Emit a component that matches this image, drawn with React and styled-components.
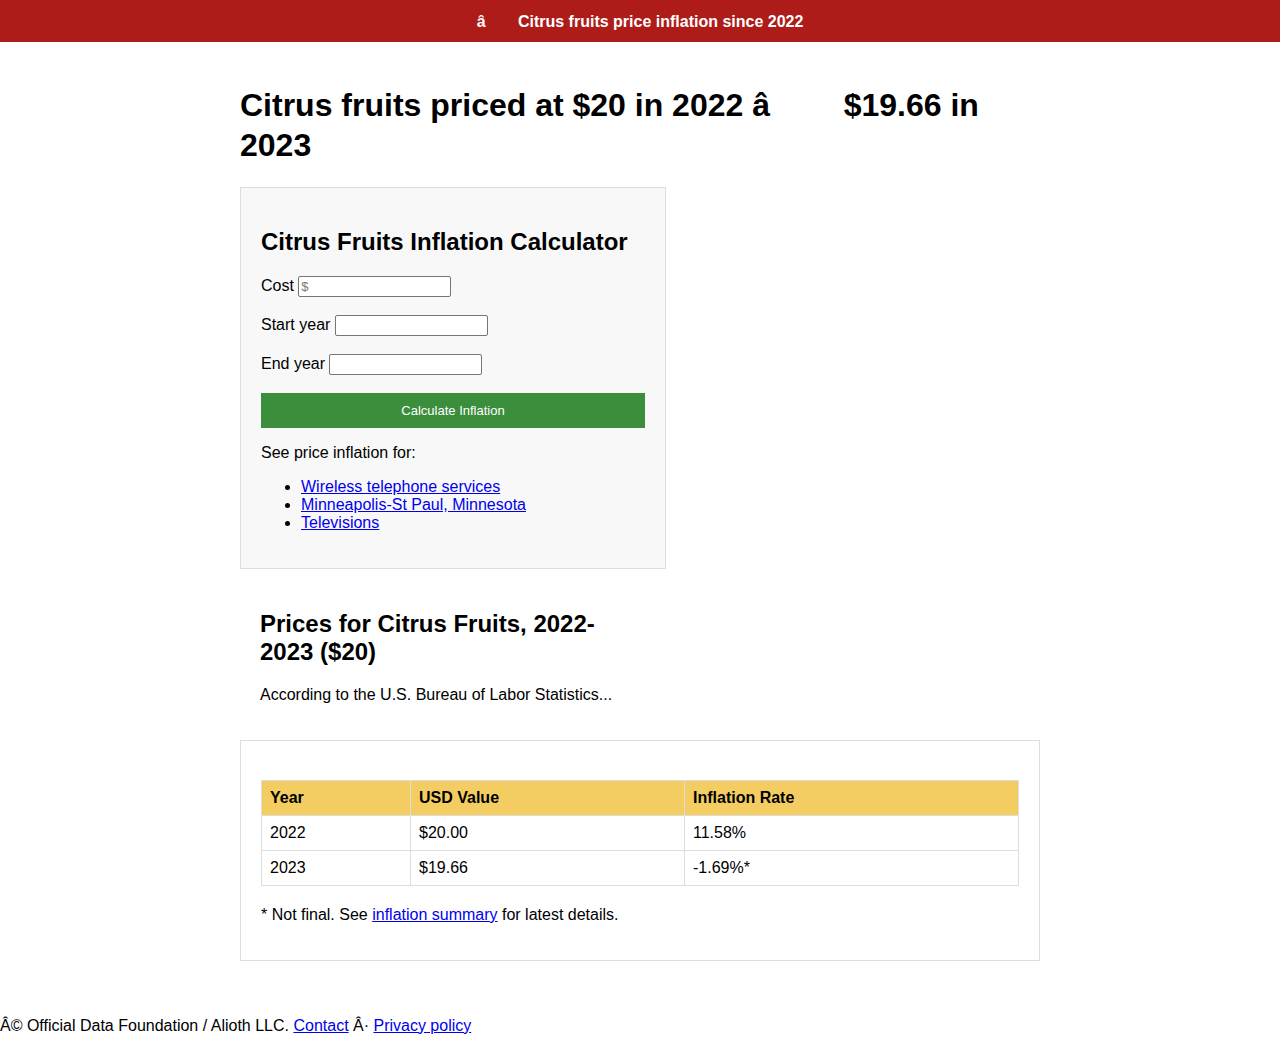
import React from 'react';
import styled, { createGlobalStyle } from 'styled-components';

const GlobalStyle = createGlobalStyle`
  body {
    margin: 0;
    font-family: "Liberation Sans", Arial, sans-serif;
    font-size: 16px;
    color: #000;
    background: #fff;
  }
  a {
    color: #0000ee;
  }
`;

const TopBar = styled.div`
  background: #ad1c18;
  height: 42px;
  box-sizing: border-box;
  padding-top: 1px;
  display: flex;
  align-items: center;
  justify-content: center;
  color: #fff;
  font-weight: bold;
  font-size: 16px;
`;

// the broken arrow bytes render a little wider in the original
const Garbled = styled.span`
  letter-spacing: 0.2em;
`;

const Main = styled.main`
  width: 800px;
  margin: 0 auto 56px;
  padding-top: 22px;
`;

const Title = styled.h1`
  font-size: 32px;
  line-height: 40px;
  margin: 0.67em 0;
`;

const Panel = styled.section`
  width: 426px;
  box-sizing: border-box;
  padding: ${(p) => (p.$shaded ? '20px' : '21px 20px 20px')};
  background: ${(p) => (p.$shaded ? '#f8f8f8' : 'transparent')};
  border: ${(p) => (p.$shaded ? '1px solid #dddddd' : 'none')};
`;

const Card = styled.section`
  box-sizing: border-box;
  padding: 20px;
  border: 1px solid #dddddd;
`;

const SubTitle = styled.h2`
  font-size: 24px;
  margin: 0.83em 0;
`;

const Field = styled.p`
  margin: 16px 0;
`;

const Input = styled.input`
  width: 153px;
  height: 21px;
  box-sizing: border-box;
  margin: 0 0 2px;
  border: 1px solid #767676;
  border-radius: 2px;
  padding: 1px 2px;
  font-family: "Liberation Sans", Arial, sans-serif;
  font-size: 13px;
  vertical-align: baseline;
  &::placeholder {
    color: #777;
  }
`;

const CalcButton = styled.button`
  display: block;
  width: 100%;
  height: 35px;
  margin: 0;
  border: none;
  background: #3a8e3c;
  color: #fff;
  font-family: "Liberation Sans", Arial, sans-serif;
  font-size: 13px;
  cursor: pointer;
`;

const Links = styled.ul`
  margin: 16px 0;
  padding-left: 40px;
`;

const Table = styled.table`
  width: 100%;
  border-collapse: collapse;
  margin: 19px 0 20px;
`;

const Th = styled.th`
  background: #f3cd62;
  text-align: left;
  font-weight: bold;
  padding: 8px;
  border: 1px solid #dddddd;
  height: 35px;
  box-sizing: border-box;
`;

const Td = styled.td`
  padding: 8px;
  border: 1px solid #dddddd;
  height: 35px;
  box-sizing: border-box;
`;

const Note = styled.p`
  margin: 16px 0;
`;

const Footer = styled.footer`
  padding: 0;
`;

const rows = [
  ['2022', '$20.00', '11.58%'],
  ['2023', '$19.66', '-1.69%*'],
];

export default function App() {
  return (
    <>
      <GlobalStyle />
      <TopBar>
        â<Garbled>{'\u0086\u0090'}</Garbled> Citrus fruits price inflation since 2022
      </TopBar>
      <Main>
        <Title>
          Citrus fruits priced at $20 in 2022 â<Garbled>{'\u0086\u0092'}</Garbled> $19.66 in 2023
        </Title>
        <Panel $shaded>
          <SubTitle>Citrus Fruits Inflation Calculator</SubTitle>
          <Field>
            Cost <Input type="text" placeholder="$" />
          </Field>
          <Field>
            Start year <Input type="text" />
          </Field>
          <Field>
            End year <Input type="text" />
          </Field>
          <CalcButton type="button">Calculate Inflation</CalcButton>
          <Field>See price inflation for:</Field>
          <Links>
            <li><a href="#">Wireless telephone services</a></li>
            <li><a href="#">Minneapolis-St Paul, Minnesota</a></li>
            <li><a href="#">Televisions</a></li>
          </Links>
        </Panel>
        <Panel>
          <SubTitle>Prices for Citrus Fruits, 2022-2023 ($20)</SubTitle>
          <Field>According to the U.S. Bureau of Labor Statistics...</Field>
        </Panel>
        <Card>
          <Table>
            <thead>
              <tr>
                <Th style={{ width: '149px' }}>Year</Th>
                <Th style={{ width: '274px' }}>USD Value</Th>
                <Th>Inflation Rate</Th>
              </tr>
            </thead>
            <tbody>
              {rows.map((r) => (
                <tr key={r[0]}>
                  {r.map((c) => (
                    <Td key={c}>{c}</Td>
                  ))}
                </tr>
              ))}
            </tbody>
          </Table>
          <Note>
            * Not final. See <a href="#">inflation summary</a> for latest details.
          </Note>
        </Card>
      </Main>
      <Footer>
        <Note>
          {'Â© Official Data Foundation / Alioth LLC. '}
          <a href="#">Contact</a>
          {' Â· '}
          <a href="#">Privacy policy</a>
        </Note>
      </Footer>
    </>
  );
}
